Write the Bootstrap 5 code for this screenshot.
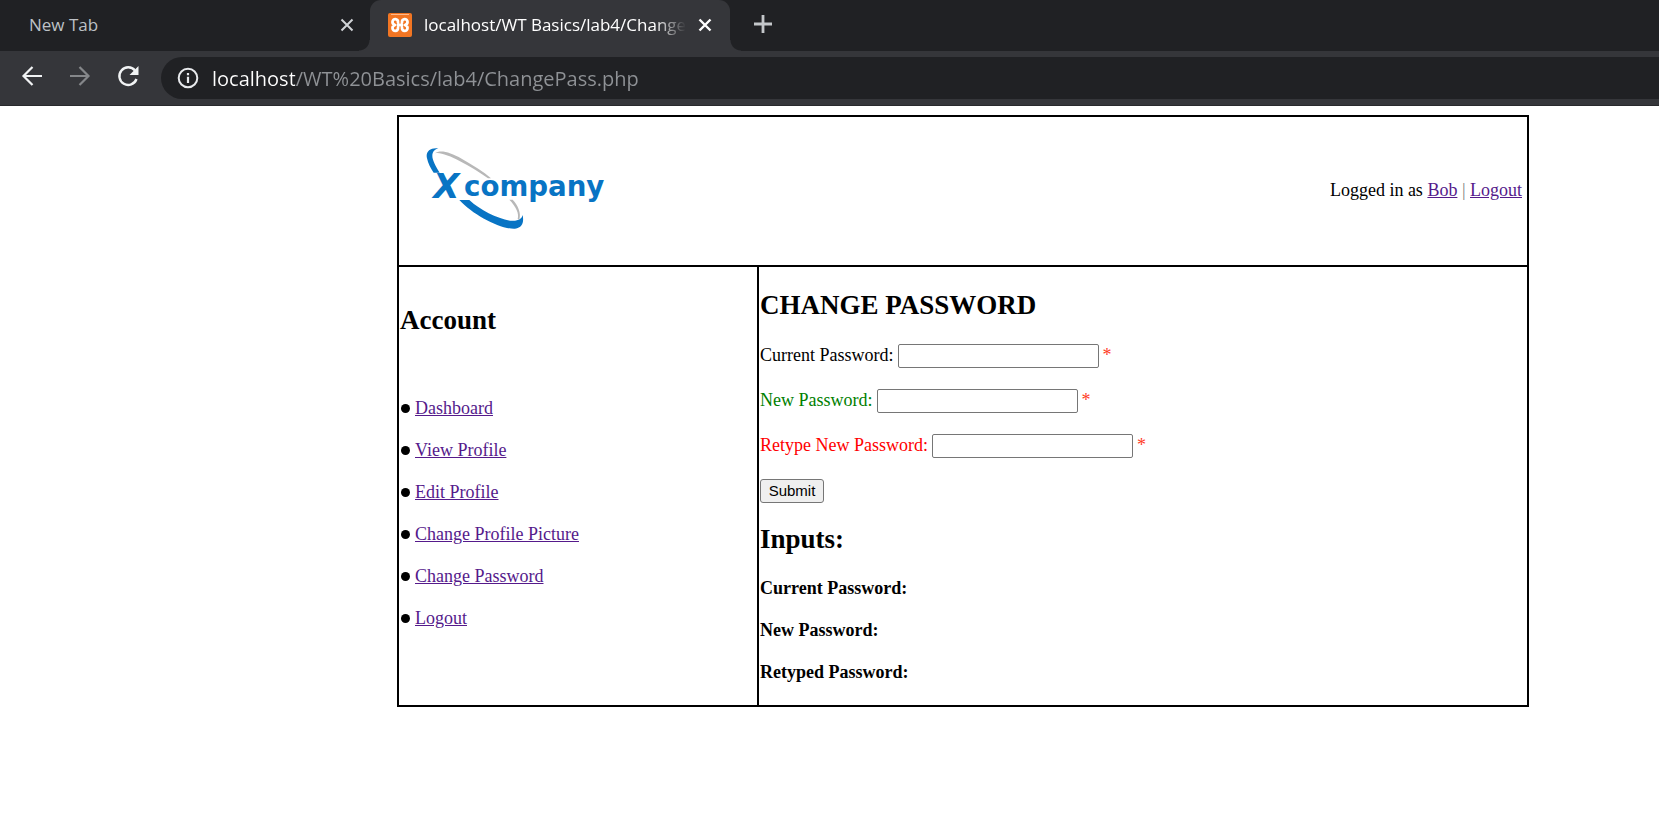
<!DOCTYPE html>
<html lang="en">
<head>
<meta charset="utf-8">
<meta name="viewport" content="width=device-width, initial-scale=1">
<title>localhost/WT Basics/lab4/ChangePass.php</title>
<link href="https://cdn.jsdelivr.net/npm/bootstrap@5.3.0/dist/css/bootstrap.min.css" rel="stylesheet">
<style>
  body { font: 18px/21px "Liberation Serif", "Times New Roman", serif; color: #000; background: #fff; }
  svg { display: block; flex: none; }

  /* browser window */
  .chrome { background: #35363a; font-family: "Open Sans", "Noto Sans", sans-serif; border-bottom: 1px solid #28292c; }
  .chrome button { border: 0; background: none; padding: 0; }
  .tab-strip { background: #202124; height: 51px; }
  .tab-item { height: 51px; font-size: 17px; line-height: 24px; padding-bottom: 2px !important; }
  .tab-idle { width: 370px; padding: 0 16px 0 29px; color: #bdc1c6; }
  .tab-active { width: 360px; padding: 0 18px; background: #35363a; color: #fff; border-radius: 11px 11px 0 0; position: relative; }
  .tab-active::before, .tab-active::after { content: ""; position: absolute; bottom: 0; width: 11px; height: 11px; }
  .tab-active::before { right: 100%; background: radial-gradient(circle at 0 0, #202124 10px, #35363a 11px); }
  .tab-active::after { left: 100%; background: radial-gradient(circle at 100% 0, #202124 10px, #35363a 11px); }
  .tab-title { margin: 0 12px; -webkit-mask-image: linear-gradient(90deg, #000 88%, transparent); }
  .toolbar { height: 54px; padding-left: 20px; }
  .tools { gap: 24px; margin-right: 21px; }
  .address { height: 42px; background: #202124; border-radius: 21px 0 0 21px; padding-left: 16px; gap: 13px; }
  .address input {
    border: 0; outline: 0; padding: 0; height: 30px; font-size: 20px; color: #8f9296;
    background: linear-gradient(90deg, #fff 83px, #8f9296 83px);
    -webkit-background-clip: text; background-clip: text; -webkit-text-fill-color: transparent;
  }

  /* page */
  main { padding: 9px 130px 0 397px; }
  .frame { border: 2px solid #000; }
  .frame a { color: #551a8b; text-decoration: underline; }
  .frame h2 { font-size: 27px; line-height: 31px; font-weight: 700; margin: 0; }
  .masthead { height: 150px; border-bottom: 2px solid #000; padding: 0 5px 2px 27px; }
  .bar { color: #808080; }
  .side { width: 360px; border-right: 2px solid #000; padding: 38px 1px 0; }
  .side ul { margin-top: 62px; gap: 21px; }
  .side li { gap: 5px; padding-left: 1px; }
  .side li::before { content: ""; width: 9px; height: 9px; border-radius: 50%; background: #000; }
  .content { padding: 23px 1px 22px; }
  .content form { margin: 23px 0 21px; gap: 21px; }
  .field { gap: 4px; height: 24px; line-height: 23px; }
  .field input { width: 201px; height: 24px; border: 1px solid #767676; border-radius: 2px; padding: 1px 2px; }
  .ok { color: green; }
  .bad { color: red; }
  .star { color: #ff3b1f; }
  .submit { width: 64px; height: 24px; padding: 0; font: 15px/22px "Liberation Sans", Arial, sans-serif; color: #000; background: #efefef; border: 1px solid #767676; border-radius: 3px; }
  .results { margin-top: 23px; gap: 21px; }
</style>
</head>
<body>
<header class="chrome">
  <div class="tab-strip d-flex align-items-center">
    <div class="tab-item tab-idle d-flex align-items-center justify-content-between">
      <span>New Tab</span>
      <button type="button" aria-label="Close New Tab"><svg width="14" height="14" viewBox="0 0 14 14" stroke="#d0d3d6" stroke-width="2"><path d="M1.500 1.500l11 11M12.500 1.500l-11 11"/></svg></button>
    </div>
    <div class="tab-item tab-active d-flex align-items-center">
      <svg width="24" height="24" viewBox="0 0 24 24"><rect width="24" height="24" rx="2" fill="#f37623"/><path d="M3 1.500h18" stroke="#ffb98a" stroke-width="1"/><path d="M10 9.500C10.500 5 4.500 5 4.500 9 4.500 10.500 5.500 11.500 7 12 5.500 12.500 4.500 13.500 4.500 15 4.500 19 10.500 19 10 14.500M14 9.500C13.500 5 19.500 5 19.500 9 19.500 10.500 18.500 11.500 17 12 18.500 12.500 19.500 13.500 19.500 15 19.500 19 13.500 19 14 14.500M10 12h4" fill="none" stroke="#fff" stroke-width="2.800" stroke-linecap="round" stroke-linejoin="round"/></svg>
      <span class="tab-title flex-fill text-nowrap">localhost/WT Basics/lab4/Change</span>
      <button type="button" aria-label="Close tab"><svg width="14" height="14" viewBox="0 0 14 14" stroke="#fff" stroke-width="2.400"><path d="M1.500 1.500l11 11M12.500 1.500l-11 11"/></svg></button>
    </div>
    <button type="button" class="ms-4 pb-1" aria-label="Open new tab"><svg width="18" height="18" viewBox="0 0 18 18" stroke="#c4c7ca" stroke-width="2.800"><path d="M9 0v18M0 9h18"/></svg></button>
  </div>
  <div class="toolbar d-flex align-items-center">
    <div class="tools d-flex pb-1">
      <button type="button" aria-label="Back"><svg width="24" height="24" viewBox="0 0 24 24" fill="none" stroke="#f1f3f4" stroke-width="2.200"><path d="M22 12H3.500M12.500 3l-9 9 9 9"/></svg></button>
      <button type="button" aria-label="Forward"><svg width="24" height="24" viewBox="0 0 24 24" fill="none" stroke="#85878a" stroke-width="2.200"><path d="M2 12h18.500M11.500 3l9 9-9 9"/></svg></button>
      <button type="button" aria-label="Reload"><svg width="24" height="24" viewBox="0 0 24 24"><path d="M20.500 15A8.800 8.800 0 1 1 19 6.500" fill="none" stroke="#f1f3f4" stroke-width="2.400"/><path d="M22.500 2v9h-9z" fill="#f1f3f4"/></svg></button>
    </div>
    <div class="address d-flex align-items-center flex-fill">
      <svg width="22" height="22" viewBox="0 0 22 22"><circle cx="11" cy="11" r="9.300" fill="none" stroke="#e8eaed" stroke-width="2"/><path d="M11 9.700v6.300M11 6v2.200" stroke="#e8eaed" stroke-width="2.200"/></svg>
      <input class="flex-fill" type="text" aria-label="Address" value="localhost/WT%20Basics/lab4/ChangePass.php">
    </div>
  </div>
</header>

<main>
  <div class="frame">
    <div class="masthead d-flex align-items-center justify-content-between">
      <svg width="180" height="84" viewBox="108 114 540 252" role="img" aria-label="Xcompany" fill="#0874c4">
        <path d="M145 115C120 112 106 125 111 145C114 160 122 176 131 188H149C138 172 127 150 127 138C127 124 135 119 145 115Z"/>
        <path fill="#b8b8b8" d="M135 130C150 118 180 126 215 146C250 166 280 184 303 205H294C270 188 240 170 210 154C180 138 150 126 135 130Z"/>
        <path d="M208 270H238C270 300 320 325 360 332C385 335 396 325 398 315C402 335 398 353 375 356C330 358 250 315 208 270Z"/>
        <path fill="#b8b8b8" d="M358 269H368C385 287 394 310 388 329L383 327C388 310 378 290 358 269Z"/>
        <text x="130" y="265" font-family="DejaVu Sans" font-weight="700" font-style="italic" font-size="102">X</text>
        <text x="222" y="257" font-family="DejaVu Sans" font-weight="700" font-size="83">company</text>
      </svg>
      <div>Logged in as <a href="#">Bob</a> <span class="bar">|</span> <a href="#">Logout</a></div>
    </div>
    <div class="d-flex">
      <nav class="side flex-shrink-0" aria-label="Account">
        <h2>Account</h2>
        <ul class="list-unstyled d-flex flex-column mb-0">
          <li class="d-flex align-items-center"><a href="#">Dashboard</a></li>
          <li class="d-flex align-items-center"><a href="#">View Profile</a></li>
          <li class="d-flex align-items-center"><a href="#">Edit Profile</a></li>
          <li class="d-flex align-items-center"><a href="#">Change Profile Picture</a></li>
          <li class="d-flex align-items-center"><a href="#">Change Password</a></li>
          <li class="d-flex align-items-center"><a href="#">Logout</a></li>
        </ul>
      </nav>
      <section class="content flex-fill">
        <h2>CHANGE PASSWORD</h2>
        <form class="d-flex flex-column">
          <div class="field d-flex"><label for="current">Current Password:</label><input id="current" type="password"><span class="star">*</span></div>
          <div class="field d-flex"><label class="ok" for="fresh">New Password:</label><input id="fresh" type="password"><span class="star">*</span></div>
          <div class="field d-flex"><label class="bad" for="retype">Retype New Password:</label><input id="retype" type="password"><span class="star">*</span></div>
          <button class="submit" type="button">Submit</button>
        </form>
        <h2>Inputs:</h2>
        <div class="results d-flex flex-column fw-bold">
          <div>Current Password:</div>
          <div>New Password:</div>
          <div>Retyped Password:</div>
        </div>
      </section>
    </div>
  </div>
</main>
<script src="https://cdn.jsdelivr.net/npm/bootstrap@5.3.0/dist/js/bootstrap.bundle.min.js"></script>
</body>
</html>
